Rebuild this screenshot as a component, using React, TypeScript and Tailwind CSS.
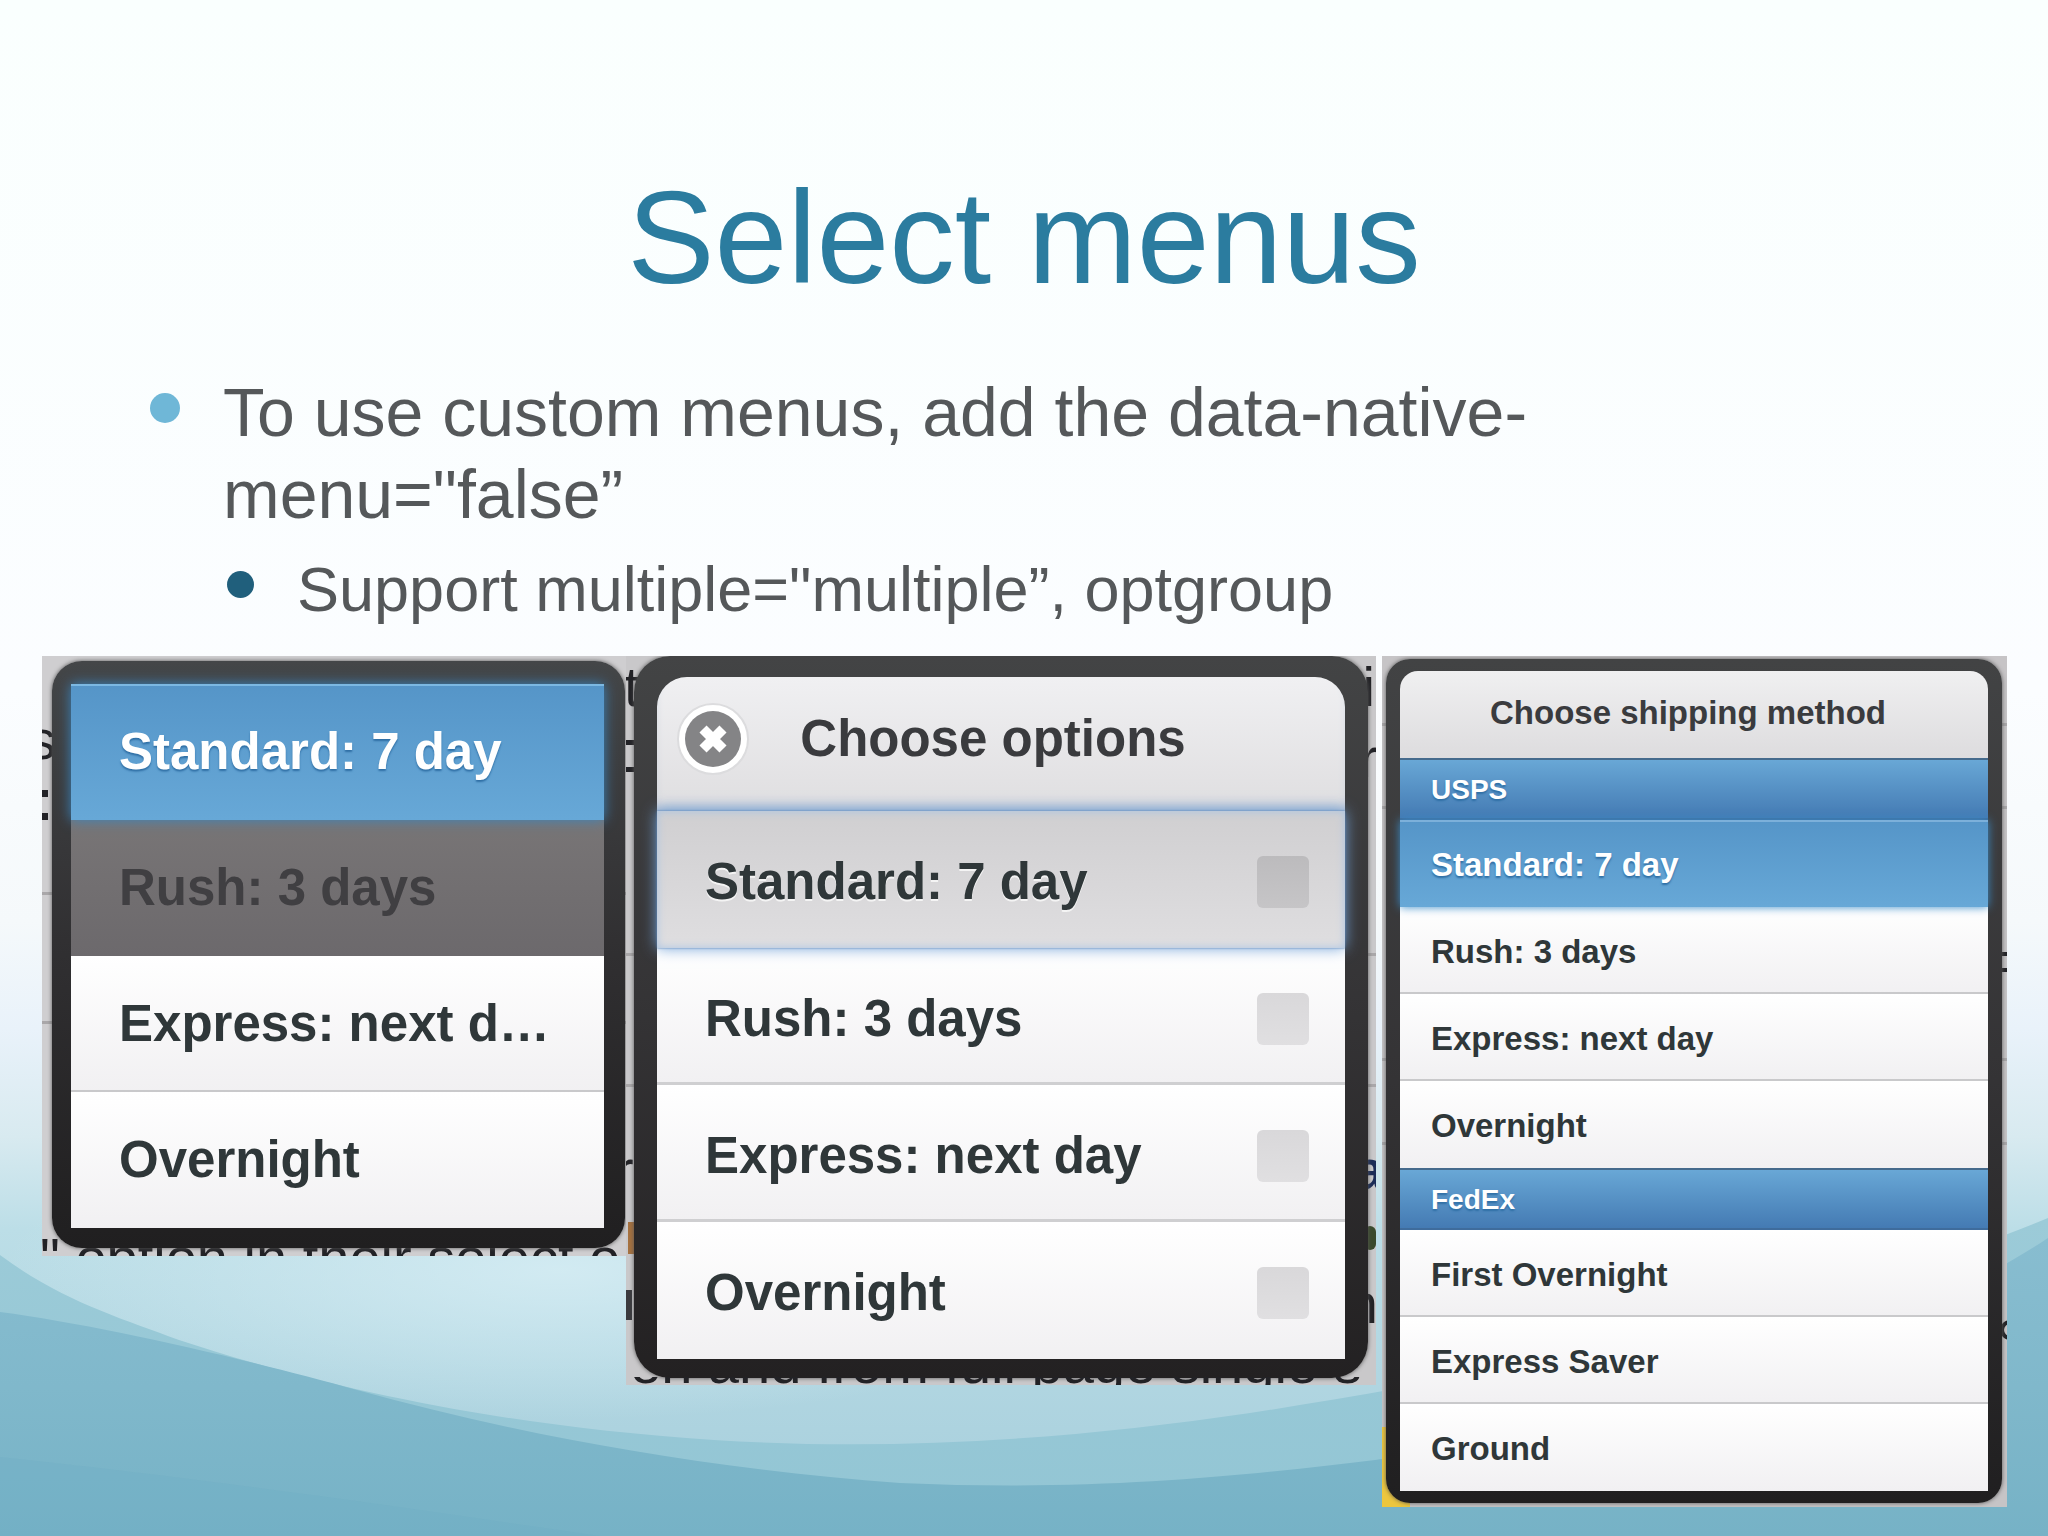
import type { ReactNode } from 'react';

const scraps = 'absolute whitespace-pre font-["Liberation_Sans",Arial,sans-serif] text-[56px] leading-[64px] text-[#222226]';

function Waves() {
  return (
    <svg
      aria-hidden="true"
      className="absolute inset-0 h-full w-full"
      viewBox="0 0 2048 1536"
      preserveAspectRatio="none"
    >
      <defs>
        <linearGradient id="sky" x1="0" y1="0" x2="0" y2="1">
          <stop offset="0" stopColor="#fafffe" />
          <stop offset="0.45" stopColor="#fbfdff" />
          <stop offset="0.6" stopColor="#f5f9fb" />
          <stop offset="0.67" stopColor="#e9f2fa" />
          <stop offset="0.74" stopColor="#d8eaf0" />
          <stop offset="0.8" stopColor="#bcdee7" />
          <stop offset="1" stopColor="#a5cddb" />
        </linearGradient>
        <radialGradient id="glow" cx="0.5" cy="0.5" r="0.5">
          <stop offset="0" stopColor="#d6edf4" stopOpacity="0.85" />
          <stop offset="1" stopColor="#d6edf4" stopOpacity="0" />
        </radialGradient>
        <linearGradient id="swell" x1="0" y1="0" x2="0" y2="1">
          <stop offset="0" stopColor="#9ccbd8" />
          <stop offset="1" stopColor="#92c5d4" />
        </linearGradient>
        <linearGradient id="deep" x1="0" y1="0" x2="0" y2="1">
          <stop offset="0" stopColor="#88bdd0" />
          <stop offset="0.5" stopColor="#80b8cb" />
          <stop offset="1" stopColor="#76b2c6" />
        </linearGradient>
      </defs>
      <rect width="2048" height="1536" fill="url(#sky)" />
      <ellipse cx="560" cy="1270" rx="560" ry="150" fill="url(#glow)" />
      <path
        d="M0 1255 C60 1300 120 1318 179 1340 C300 1380 480 1425 714 1440 C900 1452 1080 1438 1250 1413 C1560 1365 1850 1300 2048 1218 V1536 H0Z"
        fill="url(#swell)"
      />
      <path
        d="M0 1312 C100 1325 250 1360 357 1390 C520 1435 700 1468 900 1483 C1100 1492 1250 1475 1375 1460 C1600 1425 1880 1350 2048 1238 V1536 H0Z"
        fill="url(#deep)"
      />
      <path d="M0 1457 C220 1480 420 1510 600 1536 H0Z" fill="#6aabc2" fillOpacity="0.25" />
    </svg>
  );
}

function Scrap({ at, children }: { at: string; children: ReactNode }) {
  return <span className={`${scraps} ${at}`}>{children}</span>;
}

function Rule({ at }: { at: string }) {
  return <span className={`absolute inset-x-0 h-[3px] bg-[#a9a7a9] ${at}`} />;
}

const plain = 'bg-linear-to-b from-white to-[#f1f0f2] text-[#2f3739]';
const active =
  'relative bg-linear-to-b from-[#5595c8] to-[#67a8d7] text-white [text-shadow:0_2px_2px_#2f6fa5]';

function SingleMenu() {
  const row = 'block w-full truncate py-[38px] pr-10 pl-12 text-left text-[51px] leading-[60px] font-bold';
  return (
    <section
      aria-label="Shipping method"
      className="relative overflow-hidden bg-[#cfced0] pt-[5px] pr-px pb-2 pl-[10px]"
    >
      <div aria-hidden="true" className="absolute inset-0">
        <Scrap at="top-[52px] left-[-14px]">s</Scrap>
        <span className="absolute top-[134px] left-0 h-[30px] w-[6px] border-y-[7px] border-[#222226]" />
        <Rule at="top-[236px]" />
        <Rule at="top-[365px]" />
        <Scrap at="top-[570px] left-[-2px]">{'" option in their select o'}</Scrap>
      </div>
      <div className="relative rounded-[30px] bg-linear-to-b from-[#444648] via-[#302f31] to-[#201f20] pt-[23px] pr-[21px] pb-5 pl-[19px] shadow-[0_0_4px_#555]">
        <ul>
          <li>
            <button
              className={`${row} ${active} shadow-[inset_0_2px_0_#7cb8e2,0_0_12px_#3a86c0]`}
            >
              Standard: 7 day
            </button>
          </li>
          <li>
            <button
              disabled
              className={`${row} bg-linear-to-b from-[#787576] to-[#6c696c] text-[#403f42]`}
            >
              Rush: 3 days
            </button>
          </li>
          <li>
            <button className={`${row} ${plain} shadow-[inset_0_-2px_0_#c9c9cb]`}>
              Express: next d…
            </button>
          </li>
          <li>
            <button className={`${row} ${plain}`}>Overnight</button>
          </li>
        </ul>
      </div>
    </section>
  );
}

function MultiMenu() {
  const options = ['Standard: 7 day', 'Rush: 3 days', 'Express: next day', 'Overnight'];
  return (
    <section
      aria-label="Choose options"
      className="relative overflow-hidden bg-[#c9c8ca] px-2 pb-[7px]"
    >
      <div aria-hidden="true" className="absolute inset-0">
        <Scrap at="top-[-1px] left-[-2px]">t</Scrap>
        <span className="absolute top-[84px] left-0 h-[32px] w-3 border-y-[5px] border-[#222226]" />
        <Rule at="top-[297px]" />
        <Rule at="top-[428px]" />
        <Scrap at="top-[482px] left-[-11px]">r</Scrap>
        <span className="absolute top-[566px] left-[2px] h-[32px] w-3 bg-[#a5713f]" />
        <span className="absolute top-[634px] left-0 h-[30px] w-[6px] bg-[#3a3a3e]" />
        <Scrap at="top-[-1px] right-[1px]">i</Scrap>
        <Scrap at="top-[70px] right-[-2px]">r</Scrap>
        <span className="absolute right-[-9px] top-[482px] font-['Liberation_Sans',Arial,sans-serif] text-[56px] leading-[64px] font-bold text-[#1b2c58]">
          a
        </span>
        <span className="absolute right-0 top-[570px] h-6 w-3 rounded-full bg-[#3a4a2c]" />
        <Scrap at="top-[616px] right-[-2px]">n</Scrap>
      </div>
      <div className="relative rounded-[36px] bg-linear-to-b from-[#434445] via-[#343335] to-[#232122] px-[23px] pt-[21px] pb-[19px] shadow-[0_0_4px_#555]">
        <header className="flex items-center rounded-t-[30px] bg-linear-to-b from-[#f0f0f2] to-[#dfdee0] pt-[26px] pr-[34px] pb-9 pl-5 shadow-[inset_0_-10px_12px_-6px_#a9bbd3]">
          <button aria-label="Close" className="size-[72px] shrink-0 rounded-full">
            <svg viewBox="0 0 72 72" className="size-full" aria-hidden="true">
              <circle cx="36" cy="36" r="35" fill="#fff" stroke="#dcdcde" strokeWidth="2" />
              <circle cx="36" cy="36" r="28" fill="#848486" />
              <path
                d="M26 26 L46 46 M46 26 L26 46"
                stroke="#fff"
                strokeWidth="10"
                strokeLinecap="butt"
              />
            </svg>
          </button>
          <h2 className="flex-1 pr-[74px] text-center text-[51px] leading-[60px] font-bold text-[#3a3b3e]">
            Choose options
          </h2>
        </header>
        <ul>
          {options.map((label, i) => (
            <li key={label}>
              <label
                className={`flex items-center pt-[41px] pr-9 pb-9 pl-12 text-[51px] leading-[60px] font-bold ${
                  i === 0
                    ? 'relative bg-linear-to-b from-[#d0cfd1] to-[#dfdee0] text-[#2f3739] shadow-[inset_0_0_8px_#a8c4e4,0_0_14px_#6f9fd6,0_0_2px_#4a6f9c] [text-shadow:0_2px_0_#f4f4f4]'
                    : i === 3
                      ? plain
                      : `${plain} shadow-[inset_0_-3px_0_#cfcfd1]`
                }`}
              >
                <span className="flex-1">{label}</span>
                <input
                  type="checkbox"
                  className={
                    i === 0
                      ? 'size-[52px] appearance-none rounded-md bg-linear-to-b from-[#bcbbbd] to-[#c6c5c7]'
                      : 'size-[52px] appearance-none rounded-md bg-linear-to-b from-[#d9d8da] to-[#e0dfe1]'
                  }
                />
              </label>
            </li>
          ))}
        </ul>
      </div>
      <div aria-hidden="true" className="absolute inset-x-0 bottom-0 h-2 overflow-hidden">
        <Scrap at="bottom-[-11px] left-[4px]">en and from full page single s</Scrap>
      </div>
    </section>
  );
}

function GroupedMenu() {
  const groups = [
    { name: 'USPS', items: ['Standard: 7 day', 'Rush: 3 days', 'Express: next day', 'Overnight'] },
    { name: 'FedEx', items: ['First Overnight', 'Express Saver', 'Ground'] },
  ];
  const row =
    'block w-full truncate pt-[21px] pr-6 pb-[19px] pl-[31px] text-left text-[33px] leading-[47px] font-bold';
  return (
    <section
      aria-label="Choose shipping method"
      className="relative ml-[6px] overflow-hidden bg-[#c6c4c6] pt-[3px] pr-[5px] pb-1 pl-1"
    >
      <div aria-hidden="true" className="absolute inset-0">
        <Rule at="top-[67px]" />
        <Rule at="top-[150px]" />
        <span className="absolute top-[296px] right-0 h-[20px] w-3 border-y-[4px] border-[#222226]" />
        <Rule at="top-[402px]" />
        <Rule at="top-[486px]" />
        <span className="absolute top-[664px] right-[-13px] size-5 rounded-full border-[4px] border-[#222226]" />
        <span className="absolute bottom-0 left-0 h-[80px] w-7 bg-[#ecc63e]" />
      </div>
      <div className="relative rounded-[24px] bg-linear-to-b from-[#424344] via-[#343335] to-[#201f20] px-[14px] pt-3 pb-3 shadow-[0_0_4px_#555]">
        <h2 className="rounded-t-[18px] bg-linear-to-b from-[#f0f0f1] to-[#dddcde] pt-[18px] pr-3 pb-[22px] text-center text-[33px] leading-[47px] font-bold text-[#3a3b3e]">
          Choose shipping method
        </h2>
        {groups.map((group) => (
          <div key={group.name}>
            <h3 className="bg-linear-to-b from-[#6aa9d7] to-[#4379b2] pt-[13px] pr-6 pb-3 pl-[31px] text-[28px] leading-[37px] font-bold text-white shadow-[inset_0_2px_0_#456a8c,inset_0_-2px_0_#3f6c9c] [text-shadow:0_2px_2px_#2f6fa5]">
              {group.name}
            </h3>
            <ul>
              {group.items.map((item, i) => (
                <li key={item}>
                  <button
                    className={
                      item === 'Standard: 7 day'
                        ? `${row} ${active} shadow-[inset_0_2px_0_#7cb0da,0_0_9px_#3a8cc8]`
                        : i === group.items.length - 1
                          ? `${row} ${plain}`
                          : `${row} ${plain} shadow-[inset_0_-2px_0_#c9c9cb]`
                    }
                  >
                    {item}
                  </button>
                </li>
              ))}
            </ul>
          </div>
        ))}
      </div>
    </section>
  );
}

export default function App() {
  return (
    <main className='relative min-h-screen overflow-hidden font-["Liberation_Sans",Arial,sans-serif]'>
      <Waves />
      <div className="relative pt-[158px] pb-6">
        <h1 className="text-center text-[131px] leading-[160px] text-[#2b7c9f]">Select menus</h1>
        <ul className="mt-[53px] pr-[400px] pl-[150px] text-[#55585a]">
          <li>
            <div className="flex items-start">
              <span className="mt-[22px] mr-[43px] size-[30px] shrink-0 rounded-full bg-[#6fb7d7]" />
              <p className="text-[68px] leading-[82px]">
                To use custom menus, add the data-native-menu="false”
              </p>
            </div>
            <ul className="mt-4 pl-[77px]">
              <li className="flex items-start">
                <span className="mt-5 mr-[43px] size-[27px] shrink-0 rounded-full bg-[#205f7c]" />
                <p className="text-[63px] leading-[76px]">
                  Support multiple="multiple”, optgroup
                </p>
              </li>
            </ul>
          </li>
        </ul>
        <div className="mt-[29px] grid grid-cols-[584fr_750fr_631fr] items-start pr-[41px] pl-[42px]">
          <SingleMenu />
          <MultiMenu />
          <GroupedMenu />
        </div>
      </div>
    </main>
  );
}
